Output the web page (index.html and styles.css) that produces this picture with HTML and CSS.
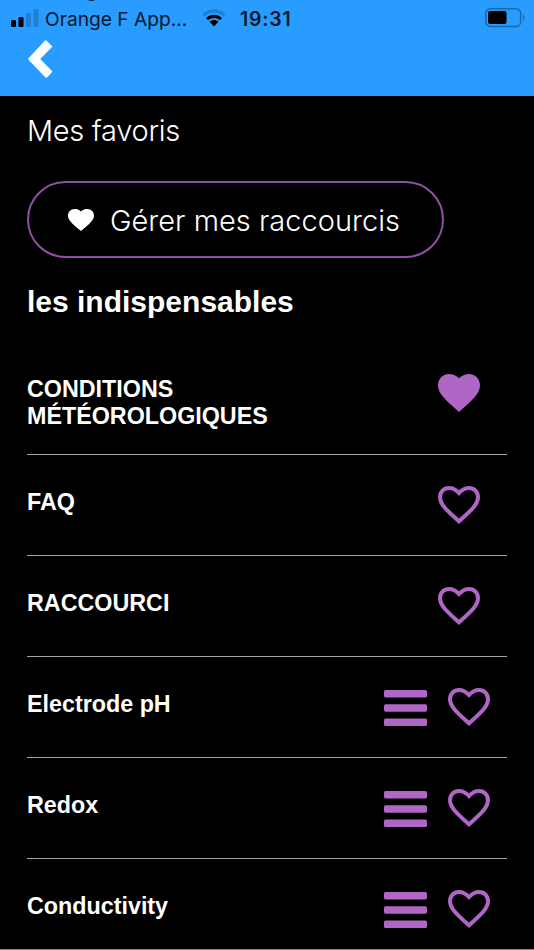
FILE: index.html
```
<!DOCTYPE html>
<html lang="fr">
  <head>
    <meta charset="utf-8">
    <meta name="viewport" content="width=device-width, initial-scale=1">
    <title>Mes favoris</title>
    <link rel="stylesheet" href="styles.css">
  </head>

  <body>
    <svg class="symbols" width="0" height="0">
      <symbol id="heart-full" viewBox="0 0 42 38">
        <path d="M21 4.3C24.5 1 27.5 0 31 0C37.4 0 42 5 42 11.3C42 19.5 35 25.5 21 38C7 25.5 0 19.5 0 11.3C0 5 4.6 0 11 0C14.5 0 17.5 1 21 4.3Z"/>
      </symbol>
      <symbol id="heart" viewBox="0 0 42 38">
        <path d="M21 7C24.5 3.2 27.5 2 31 2C36.3 2 40 6 40 11.3C40 18.3 33.5 24 21 35.3C8.5 24 2 18.3 2 11.3C2 6 5.7 2 11 2C14.5 2 17.5 3.2 21 7Z" fill="none" stroke="currentColor" stroke-width="4"/>
      </symbol>
      <symbol id="menu" viewBox="0 0 43 36">
        <rect width="43" height="7.4" rx="1.6"/>
        <rect y="14.3" width="43" height="7.4" rx="1.6"/>
        <rect y="28.6" width="43" height="7.4" rx="1.6"/>
      </symbol>
    </svg>

    <header class="header">
      <span class="cut-text">g</span>
      <div class="status-bar">
        <svg class="signal" width="28" height="18" viewBox="0 0 28 18">
          <rect x="0" y="11" width="5" height="7" rx="1.3"/>
          <rect x="7.5" y="8" width="5" height="10" rx="1.3"/>
          <rect class="off" x="15" y="4" width="5" height="14" rx="1.3"/>
          <rect class="off" x="22.5" y="0" width="5" height="18" rx="1.3"/>
        </svg>
        <span class="carrier">Orange F App...</span>
        <svg class="wifi" width="24" height="18" viewBox="0 0 24 18">
          <path class="off" d="M0.3 5.4C7-1.4 17-1.4 23.7 5.4L21.5 7.7C16 2.4 8 2.4 2.5 7.7Z"/>
          <path d="M3.9 9.1C8.5 4.6 15.5 4.6 20.1 9.1L17.9 11.3C14.5 8.1 9.5 8.1 6.1 11.3Z"/>
          <path d="M7.6 12.8C10.1 10.5 13.9 10.5 16.4 12.8L12 17.6Z"/>
        </svg>
        <span class="time">19:31</span>
        <svg class="battery" width="40" height="20" viewBox="0 0 40 20">
          <rect x="0.8" y="0.8" width="34.9" height="17.6" rx="4.5" fill="none" stroke="#1b68aa" stroke-width="1.5"/>
          <rect x="3" y="3" width="18.5" height="13" rx="2"/>
          <path d="M38 6.5Q39.6 7.5 39.6 9.6T38 12.7Z" fill="#1b68aa"/>
        </svg>
      </div>
      <a href="#" class="back" aria-label="Retour">
        <svg width="26" height="38" viewBox="0 0 26 38">
          <path d="M18.3 0.6L24 5.9Q24.6 6.5 24 7.1L12.2 19L24 31Q24.6 31.6 24 32.2L19.1 37.4Q18.3 38 17.5 37.4L0.7 20Q-0.1 19 0.7 18L17.1 0.6Q17.7 0 18.3 0.6Z"/>
        </svg>
      </a>
    </header>

    <main class="content">
      <h1 class="title">Mes favoris</h1>
      <a href="#" class="shortcuts">
        <svg width="26" height="22" viewBox="0 0 42 38" preserveAspectRatio="none"><use href="#heart-full" width="42" height="38"/></svg>
        <span>Gérer mes raccourcis</span>
      </a>
      <h2 class="subtitle">les indispensables</h2>

      <ul class="list">
        <li class="item item-tall">
          <span class="label">CONDITIONS<br>MÉTÉOROLOGIQUES</span>
          <svg class="heart" width="42" height="38"><use href="#heart-full"/></svg>
        </li>
        <li class="item">
          <span class="label">FAQ</span>
          <svg class="heart" width="42" height="38"><use href="#heart"/></svg>
        </li>
        <li class="item">
          <span class="label">RACCOURCI</span>
          <svg class="heart" width="42" height="38"><use href="#heart"/></svg>
        </li>
        <li class="item item-sortable">
          <span class="label">Electrode pH</span>
          <svg class="menu" width="43" height="36"><use href="#menu"/></svg>
          <svg class="heart" width="42" height="38"><use href="#heart"/></svg>
        </li>
        <li class="item item-sortable">
          <span class="label">Redox</span>
          <svg class="menu" width="43" height="36"><use href="#menu"/></svg>
          <svg class="heart" width="42" height="38"><use href="#heart"/></svg>
        </li>
        <li class="item item-sortable">
          <span class="label">Conductivity</span>
          <svg class="menu" width="43" height="36"><use href="#menu"/></svg>
          <svg class="heart" width="42" height="38"><use href="#heart"/></svg>
        </li>
      </ul>
    </main>
  </body>
</html>
```

FILE: styles.css
```
* {
  box-sizing: border-box;
}
body {
  margin: 0;
  height: 950px;
  overflow: hidden;
  background: #000;
  border-bottom: 1px solid #8d8b8b;
  color: #fff;
  font-family: "Liberation Sans", Arial, sans-serif;
}
a {
  color: inherit;
  text-decoration: none;
}
svg {
  display: block;
  flex-shrink: 0;
  fill: currentColor;
}
.symbols {
  position: absolute;
}

/* header */
.header {
  position: relative;
  height: 96px;
  background: #289cff;
  overflow: hidden;
}
.cut-text {
  position: absolute;
  top: -19px;
  left: 86px;
  font: 18px/20px Inter, sans-serif;
  color: #06203a;
}
.status-bar {
  display: flex;
  align-items: center;
  height: 37px;
  padding: 0 9px 0 11px;
  color: #000;
  font-family: Inter, sans-serif;
}
.signal {
  margin-top: -2px;
}
.off {
  fill: #2080d4;
}
.carrier {
  width: 143px;
  margin-left: 6px;
  color: #06182b;
  font-size: 19.2px;
  white-space: nowrap;
}
.wifi {
  margin: 0 0 1px 14px;
}
.time {
  margin-left: 14px;
  color: #06182b;
  font-size: 19.5px;
  font-weight: 600;
  letter-spacing: 0.8px;
}
.battery {
  margin: 0 0 2px auto;
}
.back {
  display: block;
  width: 26px;
  margin: 3px 0 0 28px;
}

/* content */
.content {
  padding: 0 27px;
}
.title {
  margin: 0;
  padding-top: 17px;
  font: 300 29px/36px Inter, sans-serif;
  letter-spacing: -0.3px;
}
.shortcuts {
  display: flex;
  align-items: center;
  width: 417px;
  height: 77px;
  margin-top: 32px;
  padding-left: 39px;
  border: 2px solid #9050a2;
  border-radius: 39px;
  font: 300 29px/36px Inter, sans-serif;
}
.shortcuts span {
  margin: 3px 0 0 16px;
  white-space: nowrap;
}
.subtitle {
  margin: 26px 0 0;
  font-size: 30px;
  line-height: 36px;
}
.list {
  margin: 25px 0 0;
  padding: 0;
  list-style: none;
}
.item {
  display: flex;
  align-items: center;
  height: 101px;
  padding-right: 27px;
  border-bottom: 1px solid #a3a3a3;
}
.item-tall {
  height: 110px;
  padding-bottom: 14px;
}
.item-sortable {
  padding-right: 17px;
}
.label {
  flex: 1;
  margin-bottom: 5px;
  font-size: 23.3px;
  font-weight: bold;
  line-height: 26.5px;
}
.item-tall .label {
  margin: 20px 0 0;
}
.heart, .menu {
  color: #b066c4;
}
.menu {
  margin: 2px 21px 0 0;
}
```
